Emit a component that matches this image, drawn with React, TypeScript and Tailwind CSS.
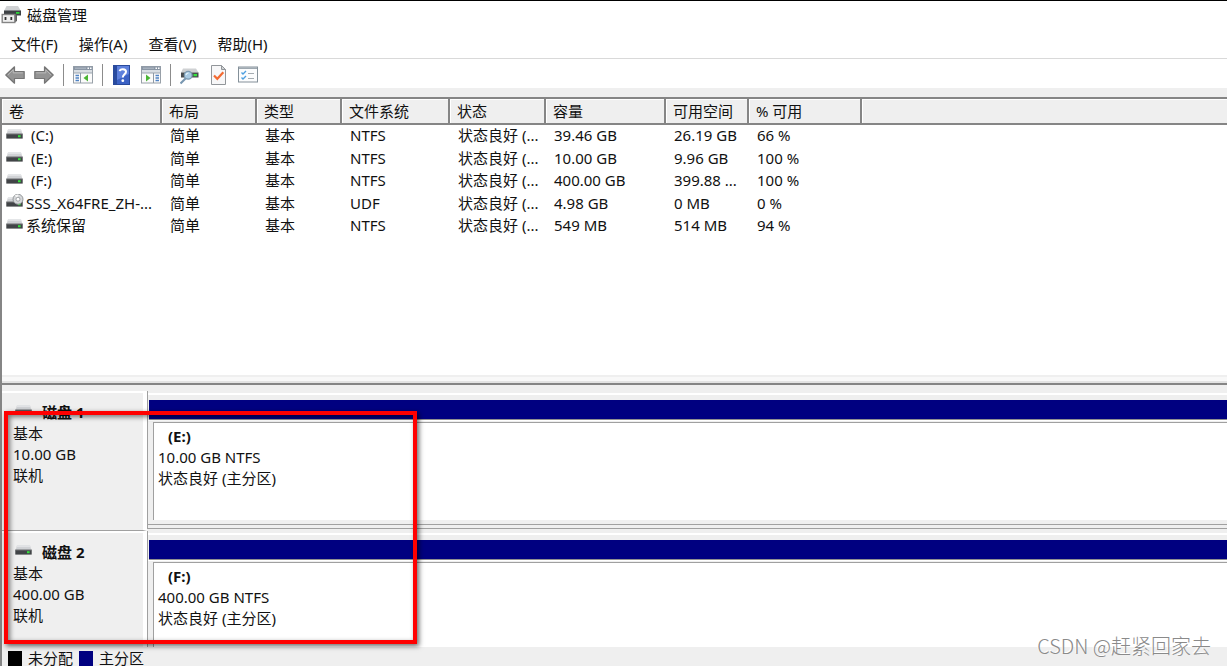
import type { ReactNode } from "react";

const menus = ["文件(F)", "操作(A)", "查看(V)", "帮助(H)"];

const columns = [
  { label: "卷", width: "w-[160px]" },
  { label: "布局", width: "w-[95px]" },
  { label: "类型", width: "w-[85px]" },
  { label: "文件系统", width: "w-[108px]" },
  { label: "状态", width: "w-[96px]" },
  { label: "容量", width: "w-[120px]" },
  { label: "可用空间", width: "w-[83px]" },
  { label: "% 可用", width: "w-[113px]" },
];

const volumes = [
  { name: "(C:)", letter: true, fs: "NTFS", size: "39.46 GB", free: "26.19 GB", percent: "66 %" },
  { name: "(E:)", letter: true, fs: "NTFS", size: "10.00 GB", free: "9.96 GB", percent: "100 %" },
  { name: "(F:)", letter: true, fs: "NTFS", size: "400.00 GB", free: "399.88 ...", percent: "100 %" },
  { name: "SSS_X64FRE_ZH-...", optical: true, fs: "UDF", size: "4.98 GB", free: "0 MB", percent: "0 %" },
  { name: "系统保留", fs: "NTFS", size: "549 MB", free: "514 MB", percent: "94 %" },
];

const disks = [
  { name: "磁盘 1", size: "10.00 GB", volume: "(E:)" },
  { name: "磁盘 2", size: "400.00 GB", volume: "(F:)" },
];

function DriveIcon({ optical = false }: { optical?: boolean }) {
  return (
    <svg width="18" height="18" viewBox="0 0 18 18" className="shrink-0">
      <path d="M2 3.5h13l1.5 4.5H.5z" fill="#d0d2d5" />
      <path d="M2 3.5h13l.4 1.5H1.5z" fill="#e2e3e6" />
      <rect x="0.3" y="7.8" width="16.4" height="4.8" fill="#414447" />
      <rect x="0.3" y="7.6" width="16.4" height="0.8" fill="#7d8083" />
      <rect x="12" y="9.2" width="2.6" height="2" fill="#35e33c" />
      {optical && (
        <g>
          <circle cx="12" cy="5.2" r="5" fill="#d5d7d9" stroke="#94979a" />
          <path d="M12 5.2 8.8 1.6A4.8 4.8 0 0 1 12.4.5z" fill="#f6f6f6" />
          <circle cx="12" cy="5.2" r="2" fill="#fff" stroke="#a0a3a6" />
        </g>
      )}
    </svg>
  );
}

function AppIcon() {
  return (
    <svg width="20" height="20" viewBox="0 0 20 20">
      <path d="M5.5 1H17l3 5H3z" fill="#cfd1d3" />
      <rect x="3" y="5.5" width="17" height="5" fill="#3d4144" />
      <rect x="15" y="7" width="3.5" height="1.8" fill="#2fd63a" />
      <path d="M13 9.5h3V16l-3 2z" fill="#5f5f5f" />
      <rect x="1.2" y="9.5" width="12.6" height="8" fill="#efefef" stroke="#858585" strokeWidth="1.4" />
      <rect x="3.6" y="12" width="1.8" height="3" fill="#333" />
      <rect x="9.4" y="12" width="1.8" height="3" fill="#333" />
    </svg>
  );
}

function ArrowIcon({ flip = false }: { flip?: boolean }) {
  return (
    <svg width="20" height="20" viewBox="0 0 20 20" className={flip ? "-scale-x-100" : ""}>
      <path
        d="M.8 10 9.5 1.8v4.7h9.7v7H9.5v4.7z"
        fill="#949494"
        stroke="#757575"
        strokeWidth="1.2"
        strokeLinejoin="round"
      />
      <path d="M2.8 10 8.2 4.8v3.1h9.6" fill="none" stroke="#bababa" />
    </svg>
  );
}

function WindowIcon({ right = false }: { right?: boolean }) {
  return (
    <svg width="20" height="20" viewBox="0 0 20 20">
      <rect x="0.5" y="1.5" width="19" height="16.5" fill="#fbfbfb" stroke="#98a0a8" />
      <rect x="0.5" y="1.5" width="19" height="3.5" fill="#8a96a5" />
      <path d="M2 3.2h11" stroke="#b4bec9" />
      <path d="M14.5 3.2H16M17 3.2h1.5" stroke="#fff" strokeWidth="1.4" />
      <rect x="1" y="5" width="18" height="3" fill="#d9dee3" />
      <path d="M1 8h18" stroke="#9ba5af" />
      <path d={right ? "M12.5 8v10" : "M7.5 8v10"} stroke="#8f9aa5" />
      <path
        d={right ? "M14.5 10.5h3.5M14.5 13h3.5M14.5 15.5h3.5" : "M2.5 10.5H6M2.5 13H6M2.5 15.5H6"}
        stroke="#4f83c4"
        strokeWidth="1.4"
      />
      <path d={right ? "M5 9.5v7l4.5-3.5z" : "M15 9.5v7L10.5 13z"} fill="#4bb535" />
    </svg>
  );
}

function HelpIcon() {
  return (
    <svg width="20" height="20" viewBox="0 0 20 20">
      <rect x="1.5" y="0.5" width="16" height="19" fill="#3c62c5" stroke="#294a9c" />
      <path d="M2 1h3v18H2z" fill="#294b9f" />
      <path d="M5 1h12v8L5 15z" fill="#5d80dc" />
      <path
        d="M7.7 6.2C8 3.5 14 3.3 14 6.7c0 2.5-3.2 2.8-3.2 5.8"
        fill="none"
        stroke="#fff"
        strokeWidth="2"
      />
      <circle cx="10.8" cy="15.7" r="1.4" fill="#fff" />
    </svg>
  );
}

function InspectIcon() {
  return (
    <svg width="20" height="20" viewBox="0 0 20 20">
      <path d="M3 3.5h13l2.5 4H1z" fill="#cfd1d3" />
      <rect x="1" y="7.5" width="17.5" height="5" fill="#494d50" />
      <rect x="13.5" y="9" width="3.5" height="2.2" fill="#35e33c" />
      <path d="m6 13-5.5 5.5" stroke="#7897b1" strokeWidth="2.2" />
      <circle cx="8.2" cy="10.3" r="3.9" fill="#a9cbe4" stroke="#7c99af" strokeWidth="1.2" />
      <path d="M6 10a2.4 2.4 0 0 1 2.5-2" fill="none" stroke="#e9f6fc" strokeWidth="1.2" />
    </svg>
  );
}

function CheckPageIcon() {
  return (
    <svg width="20" height="20" viewBox="0 0 20 20">
      <path d="M2.5.5h10l4 4v15h-14z" fill="#f7f7f8" stroke="#92969a" />
      <path d="M12.5.5v4h4z" fill="#d1d3d5" stroke="#92969a" />
      <path d="m5 10.5 3.3 3.3 6-6.5" fill="none" stroke="#f36a32" strokeWidth="2.2" />
    </svg>
  );
}

function ChecklistIcon() {
  return (
    <svg width="20" height="20" viewBox="0 0 20 20">
      <rect x="0.5" y="2" width="19" height="15" fill="#fbfcfd" stroke="#849099" />
      <path d="M1 3.2h18" stroke="#9ea8b0" strokeWidth="1.6" />
      <path d="m3.5 7.5 1.5 1.5L8 6M3.5 12.5 5 14l3-3" fill="none" stroke="#4c9fe0" strokeWidth="1.4" />
      <path d="M10 8.5h6M10 13.5h6" stroke="#a4abb1" strokeWidth="1.2" />
    </svg>
  );
}

function ToolButton({ label, children }: { label: string; children: ReactNode }) {
  return (
    <button type="button" aria-label={label} className="shrink-0">
      {children}
    </button>
  );
}

function Separator() {
  return <span className="h-[22px] w-px bg-[#8c8c8c]" />;
}

function Toolbar() {
  return (
    <div className="flex h-7 shrink-0 items-center gap-[9px] pt-1 pl-[5px]">
      <ToolButton label="后退">
        <ArrowIcon />
      </ToolButton>
      <ToolButton label="前进">
        <ArrowIcon flip />
      </ToolButton>
      <Separator />
      <ToolButton label="显示控制台树">
        <WindowIcon />
      </ToolButton>
      <Separator />
      <ToolButton label="帮助">
        <HelpIcon />
      </ToolButton>
      <ToolButton label="显示操作窗格">
        <WindowIcon right />
      </ToolButton>
      <Separator />
      <ToolButton label="重新扫描">
        <InspectIcon />
      </ToolButton>
      <ToolButton label="属性">
        <CheckPageIcon />
      </ToolButton>
      <ToolButton label="设置">
        <ChecklistIcon />
      </ToolButton>
    </div>
  );
}

function VolumeTable() {
  return (
    <table className="w-full table-fixed border-separate border-spacing-0 text-left whitespace-nowrap">
      <thead>
        <tr className="bg-[#efefef]">
          {columns.map((c) => (
            <th
              key={c.label}
              className={`${c.width} border-r-2 border-b-2 border-[#858585] p-0 font-normal`}
            >
              <div className="h-6 border-t border-l border-white pl-[6px]">{c.label}</div>
            </th>
          ))}
          <th className="border-b-2 border-[#858585] p-0">
            <div className="h-6 border-t border-l border-white" />
          </th>
        </tr>
      </thead>
      <tbody>
        {volumes.map((v) => (
          <tr key={v.name} className="align-top leading-5 odd:h-[23px] even:h-[22px]">
            <td className="p-0 pl-1">
              <div className="flex h-5 items-center gap-[2px]">
                <DriveIcon optical={v.optical} />
                <span className={v.letter ? "pl-[5px]" : ""}>{v.name}</span>
              </div>
            </td>
            <td className="p-0 pl-2">简单</td>
            <td className="p-0 pl-2">基本</td>
            <td className="p-0 pl-2">{v.fs}</td>
            <td className="p-0 pl-2">状态良好 (...</td>
            <td className="p-0 pl-2">{v.size}</td>
            <td className="p-0 pl-2">{v.free}</td>
            <td className="p-0 pl-2">{v.percent}</td>
            <td />
          </tr>
        ))}
      </tbody>
    </table>
  );
}

function DiskRow({ name, size, volume }: { name: string; size: string; volume: string }) {
  return (
    <section className="flex h-[140px] items-start leading-[21px]">
      <div className="h-full w-[145px] shrink-0 border-t-2 border-r-4 border-b border-t-white border-r-white border-b-[#a0a0a0] pt-[9px] pl-[11px]">
        <div className="flex items-center gap-[9px] pl-[2px] font-bold">
          <span className="-mt-1">
            <DriveIcon />
          </span>
          {name}
        </div>
        <p>基本</p>
        <p>{size}</p>
        <p>联机</p>
      </div>
      <div className="h-[138px] min-w-0 flex-1 border-b border-l border-[#a0a0a0]">
        <div className="mt-[2px] h-[2px] bg-white" />
        <div className="mt-[5px] ml-px h-5 border-b border-[#909090] bg-[#000080]" />
        <div className="h-[2px] border-t border-white" />
        <div className="ml-[5px] h-[98px] border-t border-l border-[#a0a0a0] bg-white pt-[3px] pl-1">
          <p className="pl-[10px] font-bold">{volume}</p>
          <p>{size} NTFS</p>
          <p>状态良好 (主分区)</p>
        </div>
        <div className="mt-1 h-px bg-[#a0a0a0]" />
      </div>
    </section>
  );
}

export default function App() {
  return (
    <main className="relative flex h-screen flex-col overflow-hidden border-t border-black bg-white font-['Noto_Sans','Noto_Sans_CJK_SC',sans-serif] text-[15px] leading-[22px] text-[#111]">
      <header className="flex h-7 shrink-0 items-center gap-[6px] pl-px">
        <AppIcon />
        <h1>磁盘管理</h1>
      </header>
      <nav className="flex h-[30px] shrink-0 items-center gap-[21px] border-b border-[#d9d9d9] pl-[11px]">
        {menus.map((m) => (
          <button key={m} type="button">
            {m}
          </button>
        ))}
      </nav>
      <Toolbar />
      <div className="mt-px h-[9px] shrink-0 bg-[#efefef]" />

      <div className="flex min-h-0 flex-1 flex-col border-t-2 border-l-2 border-[#858585]">
        <div className="min-h-0 flex-1 overflow-hidden">
          <VolumeTable />
        </div>
        <div className="h-2 shrink-0 border-y-2 border-t-[#efefef] border-b-[#e3e3e3] bg-[#f8f8f8]" />

        <div className="relative shrink-0 border-t-2 border-[#858585] bg-[#efefef] pt-[6px]">
          <div className="h-[256px] overflow-hidden">
            {disks.map((d) => (
              <DiskRow key={d.name} {...d} />
            ))}
          </div>
          <footer className="flex h-[19px] items-center gap-[6px] pl-[6px] leading-[19px] whitespace-nowrap">
            <span className="mt-1 h-[15px] w-[14px] bg-black" />
            <span className="pt-1">未分配</span>
            <span className="mt-1 h-[15px] w-[14px] bg-[#000080]" />
            <span className="pt-1">主分区</span>
          </footer>
          {/* highlighted disks */}
          <div className="absolute top-[26px] left-[2px] h-[233px] w-[413px] border-4 border-[#ff0000] shadow-[2px_2px_5px_rgba(0,0,0,0.6),inset_2px_2px_5px_rgba(0,0,0,0.5)]" />
        </div>
      </div>

      <p className="absolute right-4 bottom-[6px] font-['Noto_Sans_CJK_SC',sans-serif] text-[20px] leading-7 font-light text-[#8a8a8a] [text-shadow:-1px_-1px_0_#fff]">
        CSDN @赶紧回家去
      </p>
    </main>
  );
}
